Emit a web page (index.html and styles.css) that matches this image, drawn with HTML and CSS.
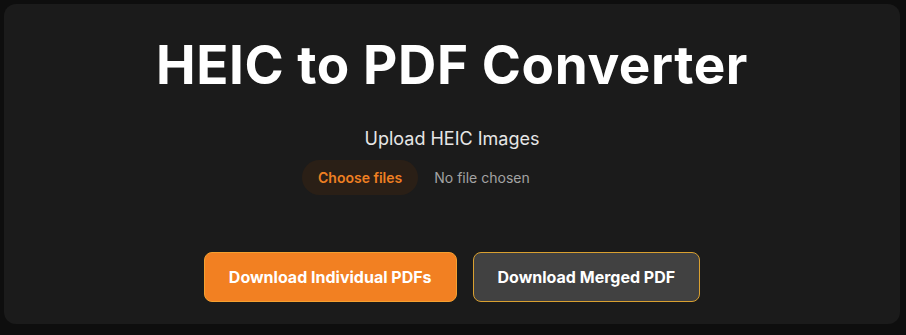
FILE: index.html
```html
<!DOCTYPE html>
<html lang="en">
<head>
<meta charset="utf-8">
<title>HEIC to PDF Converter</title>
<link rel="stylesheet" href="styles.css">
</head>
<body>
<main class="card">
  <h1 class="title">HEIC to PDF Converter</h1>
  <div class="upload">
    <p class="upload-label">Upload HEIC Images</p>
    <label class="file-picker">
      <span class="file-button">Choose files</span>
      <span class="file-status">No file chosen</span>
    </label>
  </div>
  <div class="actions">
    <button class="btn btn-primary" type="button">Download Individual PDFs</button>
    <button class="btn btn-secondary" type="button">Download Merged PDF</button>
  </div>
</main>
</body>
</html>
```
FILE: styles.css
```css
html, body {
  margin: 0;
  padding: 0;
}
body {
  background: #0e0e0e;
  padding: 4px 6px 11px 4px;
  font-family: Inter, "Noto Sans", sans-serif;
  color: #ffffff;
  box-sizing: border-box;
  height: 335px;
}
.card {
  background: #1b1b1b;
  border-radius: 12px;
  height: 100%;
  box-sizing: border-box;
  padding: 29px 20px 22px;
  display: flex;
  flex-direction: column;
  align-items: center;
}
.title {
  margin: 0;
  font-size: 53px;
  font-weight: 700;
  line-height: 64px;
  letter-spacing: 0.6px;
  color: #ffffff;
}
.upload {
  margin-top: 31px;
  display: flex;
  flex-direction: column;
  align-items: center;
  gap: 10px;
}
.upload-label {
  margin: 0;
  font-size: 18px;
  line-height: 22px;
  color: #e6e6e6;
}
.file-picker {
  width: 302px;
  display: flex;
  align-items: center;
  gap: 16px;
  margin-left: 2px;
}
.file-button {
  background: #2a1f16;
  color: #ef7f22;
  font-size: 14px;
  font-weight: 600;
  height: 35px;
  line-height: 35px;
  padding: 0 16px;
  border-radius: 18px;
}
.file-status {
  color: #a3a3a3;
  font-size: 14px;
}
.actions {
  margin-top: auto;
  display: flex;
  gap: 16px;
}
.btn {
  font-family: Inter, "Noto Sans", sans-serif;
  font-size: 16px;
  font-weight: 700;
  color: #ffffff;
  height: 50px;
  padding: 0 24px;
  border-radius: 8px;
  cursor: pointer;
}
.btn-primary {
  background: #f28022;
  border: 1px solid #f5a030;
}
.btn-secondary {
  background: #414141;
  border: 1px solid #d9a030;
}
```
